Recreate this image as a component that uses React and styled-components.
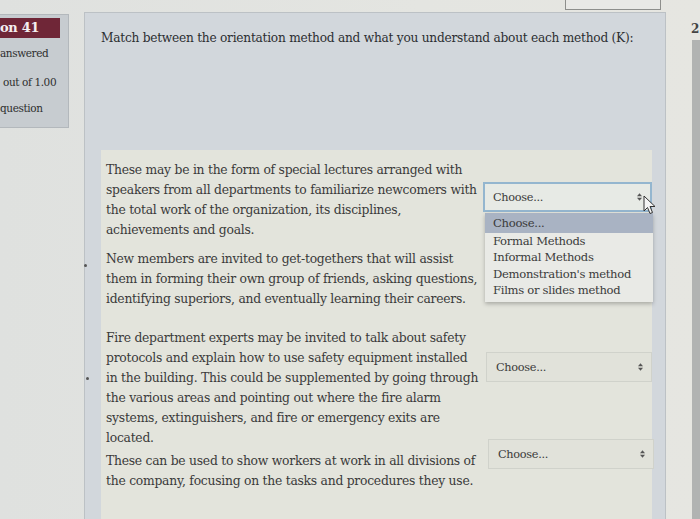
import React from "react";
import styled, { createGlobalStyle } from "styled-components";

const Global = createGlobalStyle`
  html, body { margin: 0; padding: 0; }
  body {
    width: 700px; height: 519px; overflow: hidden;
    background: #e2e4e1;
    font-family: "DejaVu Serif", serif;
    color: #363636;
  }
`;

const Page = styled.div`
  position: relative;
  width: 700px;
  height: 519px;
  display: flex;
  align-items: flex-start;
  background: linear-gradient(90deg, #dfe1df 0%, #e4e5e1 60%, #e6e6e1 100%);
  overflow: hidden;
`;

const TopButton = styled.div`
  position: absolute;
  left: 565px;
  top: -4px;
  width: 94px;
  height: 12px;
  border: 1px solid #8e8f8c;
  background: #e9e9e6;
`;

const Info = styled.div`
  margin-top: 14px;
  width: 69px;
  height: 114px;
  box-sizing: border-box;
  background: #c7ccd0;
  border: 1px solid #b3b8bc;
  border-left: none;
  display: flex;
  flex-direction: column;
  align-items: flex-start;
  flex-shrink: 0;
`;

const Qno = styled.div`
  margin-top: 3px;
  width: 60px;
  height: 20px;
  background: #6f2637;
  color: #f4eef0;
  font-weight: bold;
  font-size: 13px;
  line-height: 20px;
  box-sizing: border-box;
  letter-spacing: -0.3px;
`;

const InfoLine = styled.div`
  font-size: 10.5px;
  color: #2e2e2e;
  margin-top: ${(p) => p.$mt}px;
  padding-left: ${(p) => p.$pl || 0}px;
  letter-spacing: -0.4px;
`;

const Question = styled.div`
  margin-top: 12px;
  margin-left: 15px;
  width: 582px;
  height: 520px;
  box-sizing: border-box;
  background: #d2d7dc;
  border: 1px solid #bcc1c5;
  padding: 16px 13px 0 16px;
  flex-shrink: 0;
`;

const Title = styled.div`
  font-size: 12.2px;
  line-height: 18px;
  color: #2c2e31;
  letter-spacing: -0.25px;
`;

const Answers = styled.div`
  margin-top: 103px;
  background: #e3e4dc;
  padding: 10px 0 0 5px;
  height: 420px;
`;

const Row = styled.div`
  display: grid;
  grid-template-columns: 377px 170px;
  align-items: start;
  margin-bottom: ${(p) => p.$mb}px;
  position: relative;
`;

const RowText = styled.div`
  font-size: 12.35px;
  line-height: 20px;
  color: #3a3a3a;
  letter-spacing: -0.25px;
  white-space: nowrap;
`;

const Line = styled.span`
  display: block;
`;

const Select = styled.div`
  position: relative;
  width: ${(p) => (p.$focus ? 169 : 166)}px;
  height: 30px;
  box-sizing: border-box;
  border: ${(p) => (p.$focus ? "2px solid #94b6cf" : "1px solid #d0d2cb")};
  background: ${(p) => (p.$focus ? "#e7eae5" : "#e1e2da")};
  display: flex;
  align-items: center;
  justify-content: space-between;
  padding: 0 8px 0 ${(p) => (p.$focus ? 8 : 9)}px;
  margin-top: ${(p) => p.$mt || 0}px;
  margin-left: ${(p) => p.$ml || 0}px;
  font-size: 11.3px;
  letter-spacing: -0.3px;
  color: #3b3b3b;
`;

const Menu = styled.div`
  position: absolute;
  left: 0px;
  top: 29px;
  width: 168px;
  background: #e9eae6;
  box-shadow: 0 2px 4px rgba(0, 0, 0, 0.25);
  z-index: 5;
  padding-bottom: 3px;
`;

const Option = styled.div`
  font-size: 11.6px;
  line-height: 16.5px;
  padding-left: 8px;
  color: #3a3a3a;
  background: ${(p) => (p.$active ? "#a9b3c3" : "transparent")};
  padding-top: ${(p) => (p.$active ? 2 : 0)}px;
  padding-bottom: ${(p) => (p.$active ? 1 : 0)}px;
  letter-spacing: -0.3px;
`;

const Cursor = styled.svg`
  position: absolute;
  right: -7px;
  top: 11px;
  z-index: 6;
`;

const RightStrip = styled.div`
  position: absolute;
  right: 0;
  top: 40px;
  width: 8px;
  height: 479px;
  background: #b1b3b2;
`;

const Corner = styled.div`
  position: absolute;
  left: 691px;
  top: 22px;
  font-size: 12px;
  color: #444;
  font-weight: bold;
`;

const Speck = styled.div`
  position: absolute;
  left: ${(p) => p.$x}px;
  top: ${(p) => p.$y}px;
  width: 3px;
  height: 3px;
  border-radius: 50%;
  background: #555;
`;

const Arrows = () => (
  <svg width="5" height="8" viewBox="0 0 6 9">
    <path d="M3 0 L6 3.5 L0 3.5 Z" fill="#555" />
    <path d="M3 9 L6 5.5 L0 5.5 Z" fill="#555" />
  </svg>
);

const Text = ({ lines }) => (
  <RowText>
    {lines.map((l, i) => (
      <Line key={i}>{l}</Line>
    ))}
  </RowText>
);

export default function App() {
  return (
    <>
      <Global />
      <Page>
        <TopButton />
        <Info>
          <Qno>on 41</Qno>
          <InfoLine $mt={9}>answered</InfoLine>
          <InfoLine $mt={17} $pl={3}>out of 1.00</InfoLine>
          <InfoLine $mt={14}>question</InfoLine>
        </Info>
        <Question>
          <Title>Match between the orientation method and what you understand about each method (K):</Title>
          <Answers>
            <Row $mb={9}>
              <Text
                lines={[
                  "These may be in the form of special lectures arranged with",
                  "speakers from all departments to familiarize newcomers with",
                  "the total work of the organization, its disciplines,",
                  "achievements and goals.",
                ]}
              />
              <Select $focus $mt={22}>
                <span>Choose...</span>
                <Arrows />
                <Cursor width="14" height="20" viewBox="0 0 14 20">
                  <path d="M1 1 L1 16 L4.5 12.5 L7 18.5 L9.5 17.5 L7 11.5 L12 11.5 Z" fill="#f4f4f4" stroke="#333" strokeWidth="1" />
                </Cursor>
                <Menu>
                  <Option $active>Choose...</Option>
                  <Option>Formal Methods</Option>
                  <Option>Informal Methods</Option>
                  <Option>Demonstration's method</Option>
                  <Option>Films or slides method</Option>
                </Menu>
              </Select>
            </Row>
            <Row $mb={19}>
              <Text
                lines={[
                  "New members are invited to get-togethers that will assist",
                  "them in forming their own group of friends, asking questions,",
                  "identifying superiors, and eventually learning their careers.",
                ]}
              />
              <div />
            </Row>
            <Row $mb={3}>
              <Text
                lines={[
                  "Fire department experts may be invited to talk about safety",
                  "protocols and explain how to use safety equipment installed",
                  "in the building. This could be supplemented by going through",
                  "the various areas and pointing out where the fire alarm",
                  "systems, extinguishers, and fire or emergency exits are",
                  "located.",
                ]}
              />
              <Select $mt={24} $ml={3}>
                <span>Choose...</span>
                <Arrows />
              </Select>
            </Row>
            <Row $mb={0}>
              <Text
                lines={[
                  "These can be used to show workers at work in all divisions of",
                  "the company, focusing on the tasks and procedures they use.",
                ]}
              />
              <Select $mt={-12} $ml={5}>
                <span>Choose...</span>
                <Arrows />
              </Select>
            </Row>
          </Answers>
        </Question>
        <Speck $x={84} $y={264} />
        <Speck $x={86} $y={377} />
        <RightStrip />
        <Corner>2</Corner>
      </Page>
    </>
  );
}
